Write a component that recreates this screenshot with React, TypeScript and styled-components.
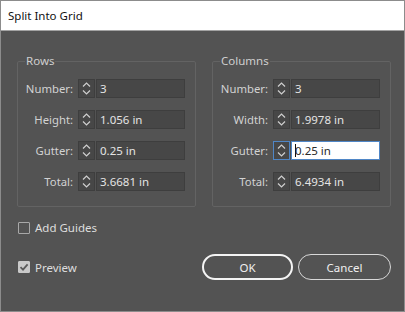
import React from "react";
import styled, { createGlobalStyle } from "styled-components";

const GlobalStyle = createGlobalStyle`
  html, body {
    margin: 0;
    padding: 0;
    background: #535353;
  }
  body {
    font-family: "Noto Sans", "Open Sans", sans-serif;
  }
`;

interface FieldProps {
  label: string;
  value: string;
  focused?: boolean;
}

const Spinner = () => (
  <svg width="9" height="13" viewBox="0 0 9 13" fill="none">
    <path d="M1 4.5 L4.5 1 L8 4.5" stroke="#cfcfcf" strokeWidth="1.2" />
    <path d="M1 8.5 L4.5 12 L8 8.5" stroke="#cfcfcf" strokeWidth="1.2" />
  </svg>
);

const FieldRow: React.FC<FieldProps> = ({ label, value, focused }) => (
  <>
    <Label>{label}</Label>
    <FieldBox>
      <Stepper $focused={focused}>
        <Spinner />
      </Stepper>
      <Input $focused={focused}>
        {focused && <Caret />}
        {value}
      </Input>
    </FieldBox>
  </>
);

const App: React.FC = () => {
  return (
    <Window>
      <GlobalStyle />
      <TitleBar>Split Into Grid</TitleBar>
      <Body>
        <Groups>
          <Group>
            <Legend>Rows</Legend>
            <Grid>
              <FieldRow label="Number:" value="3" />
              <FieldRow label="Height:" value="1.056 in" />
              <FieldRow label="Gutter:" value="0.25 in" />
              <FieldRow label="Total:" value="3.6681 in" />
            </Grid>
          </Group>
          <Group>
            <Legend>Columns</Legend>
            <Grid>
              <FieldRow label="Number:" value="3" />
              <FieldRow label="Width:" value="1.9978 in" />
              <FieldRow label="Gutter:" value="0.25 in" focused />
              <FieldRow label="Total:" value="6.4934 in" />
            </Grid>
          </Group>
        </Groups>

        <CheckRow>
          <Box />
          <CheckText>Add Guides</CheckText>
        </CheckRow>

        <Footer>
          <CheckRow>
            <Box $checked>
              <svg width="10" height="10" viewBox="0 0 10 10">
                <path d="M1.5 5.2 L4 7.6 L8.6 2.4" stroke="#5a5a5a" strokeWidth="1.8" fill="none" />
              </svg>
            </Box>
            <CheckText>Preview</CheckText>
          </CheckRow>
          <Buttons>
            <Button $primary>OK</Button>
            <Button>Cancel</Button>
          </Buttons>
        </Footer>
      </Body>
    </Window>
  );
};

const Window = styled.div`
  width: 405px;
  height: 312px;
  box-sizing: border-box;
  border: 1px solid #8c8c8c;
  background: #535353;
  display: flex;
  flex-direction: column;
`;

const TitleBar = styled.div`
  height: 29px;
  background: #fff;
  border-bottom: 1px solid #a3a3a3;
  color: #111;
  font-size: 11.5px;
  display: flex;
  align-items: center;
  padding-left: 7px;
`;

const Body = styled.div`
  flex: 1;
  padding: 22px 13px 0 16px;
  display: flex;
  flex-direction: column;
`;

const Groups = styled.div`
  display: flex;
  gap: 16px;
`;

const Group = styled.fieldset`
  margin: 0;
  width: 179px;
  box-sizing: border-box;
  border: 1px solid #636363;
  border-radius: 2px;
  padding: 10px 10px 15px 0;
  min-width: 0;
`;

const Legend = styled.legend`
  color: #cfcfcf;
  font-size: 11.5px;
  padding: 0 1px;
  margin-left: 7px;
  line-height: 16px;
`;

const Grid = styled.div`
  display: grid;
  grid-template-columns: 55px 1fr;
  column-gap: 5px;
  row-gap: 12px;
  align-items: center;
`;

const Label = styled.span`
  color: #d2d2d2;
  font-size: 11.3px;
  text-align: right;
`;

const FieldBox = styled.div`
  display: flex;
  height: 19px;
  gap: 1px;
`;

const Stepper = styled.div<{ $focused?: boolean }>`
  width: 17px;
  box-sizing: border-box;
  background: #474747;
  border: 1px solid ${(p) => (p.$focused ? "#4f86c6" : "#3e3e3e")};
  display: flex;
  align-items: center;
  justify-content: center;
`;

const Input = styled.div<{ $focused?: boolean }>`
  flex: 1;
  box-sizing: border-box;
  background: ${(p) => (p.$focused ? "#ffffff" : "#474747")};
  border: 1px solid ${(p) => (p.$focused ? "#4f86c6" : "#3e3e3e")};
  color: ${(p) => (p.$focused ? "#2a2a2a" : "#e4e4e4")};
  font-size: 11.5px;
  display: flex;
  align-items: center;
  padding-left: 3px;
`;

const Caret = styled.span`
  width: 1px;
  height: 13px;
  background: #111;
  margin-right: -1px;
`;

const CheckRow = styled.div`
  display: flex;
  align-items: center;
  gap: 5px;
  margin-top: 13px;
  margin-left: 1px;
`;

const Box = styled.div<{ $checked?: boolean }>`
  width: 12px;
  height: 12px;
  box-sizing: border-box;
  border: 1px solid ${(p) => (p.$checked ? "#c9c9c9" : "#a8a8a8")};
  background: ${(p) => (p.$checked ? "#c9c9c9" : "transparent")};
  border-radius: 1px;
  display: flex;
  align-items: center;
  justify-content: center;
`;

const CheckText = styled.span`
  color: #dedede;
  font-size: 11.5px;
`;

const Footer = styled.div`
  display: flex;
  justify-content: space-between;
  align-items: center;
  margin-top: 19px;

  ${CheckRow} {
    margin-top: 0;
  }
`;

const Buttons = styled.div`
  display: flex;
  gap: 5px;
`;

const Button = styled.button<{ $primary?: boolean }>`
  width: ${(p) => (p.$primary ? "91px" : "93px")};
  height: 26px;
  box-sizing: border-box;
  border-radius: 13px;
  background: transparent;
  border: ${(p) => (p.$primary ? "2px solid #f4f4f4" : "1px solid #d8d8d8")};
  color: #f0f0f0;
  font-family: "Noto Sans", "Open Sans", sans-serif;
  font-size: 11.5px;
  padding: 0;
`;

export default App;
